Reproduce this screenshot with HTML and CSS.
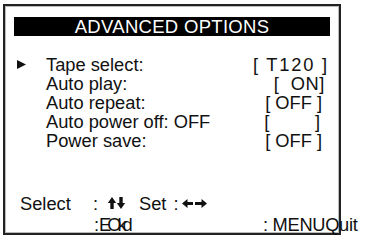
FILE: index.html
```html
<!DOCTYPE html>
<html>
<head>
<meta charset="utf-8">
<link rel="stylesheet" href="styles.css">
</head>
<body>
<div class="screen">
  <div class="title">ADVANCED OPTIONS</div>
  <div class="rows">
    <div class="row"><span class="cursor"><svg width="9" height="9" viewBox="0 0 9 9"><path d="M0 0 L9 4.5 L0 9 Z" fill="#111"/></svg></span><span class="label">Tape select:</span><span class="val tape">[ T120 ]</span></div>
    <div class="row"><span class="cursor"></span><span class="label">Auto play:</span><span class="val v-on">[  ON]</span></div>
    <div class="row"><span class="cursor"></span><span class="label">Auto repeat:</span><span class="val v-off">[ OFF ]</span></div>
    <div class="row"><span class="cursor"></span><span class="label">Auto power off: OFF</span><span class="val v-blank">[         ]</span></div>
    <div class="row"><span class="cursor"></span><span class="label">Power save:</span><span class="val v-off">[ OFF ]</span></div>
  </div>
  <div class="help">
    <div class="hline">
      <span class="hkey">Select</span><span class="colon">:</span><svg class="ud" width="17" height="13" viewBox="0 0 17 13"><path d="M4 0 L8.2 6 L5.7 6 L5.7 12 L2.3 12 L2.3 6 L-0.2 6 Z" fill="#111"/><path d="M13 12 L8.8 6 L11.3 6 L11.3 0 L14.7 0 L14.7 6 L17.2 6 Z" fill="#111"/></svg><span class="set">Set</span><span class="colon2">:</span><svg class="lr" width="25" height="9" viewBox="0 0 25 9"><path d="M0 4.5 L5.5 0 L5.5 3 L11 3 L11 6 L5.5 6 L5.5 9 Z" fill="#111"/><path d="M25 4.5 L19.5 0 L19.5 3 L13 3 L13 6 L19.5 6 L19.5 9 Z" fill="#111"/></svg>
    </div>
    <div class="hline second">
      <span class="colon3">:</span><span class="garble">EOkd</span><span class="quit">: MENUQuit</span>
    </div>
  </div>
</div>
</body>
</html>
```

FILE: styles.css
```css
html, body {
  margin: 0;
  padding: 0;
  background: #fff;
}
body {
  font-family: "Liberation Sans", Arial, sans-serif;
  color: #111;
}
.screen {
  box-sizing: border-box;
  margin: 4px 0 0 3px;
  width: 338px;
  height: 231px;
  border: 2px solid #222;
  box-shadow: inset 0 0 0 1px #bbb;
  padding: 11px 9px 0 9px;
  overflow: visible;
}
.title {
  height: 19px;
  background: #000;
  color: #fff;
  font-size: 18.5px;
  line-height: 20px;
  text-align: center;
  letter-spacing: 0.3px;
}
.rows {
  margin-top: 19px;
}
.row {
  display: flex;
  align-items: center;
  height: 19px;
  font-size: 18.3px;
  line-height: 19px;
}
.cursor {
  width: 32px;
  flex-shrink: 0;
  padding-left: 3px;
  box-sizing: border-box;
  display: flex;
  align-items: center;
}
.label {
  flex: 1;
  white-space: pre;
}
.val {
  white-space: pre;
  text-align: right;
}
.tape {
  letter-spacing: 1.8px;
  margin-right: 1px;
}
.v-on {
  margin-right: 5px;
  letter-spacing: 0.6px;
}
.v-off {
  margin-right: 8px;
}
.v-blank {
  margin-right: 10px;
}
.help {
  margin-top: 43px;
  font-size: 18.3px;
  line-height: 21px;
}
.hline {
  display: flex;
  align-items: center;
  height: 21px;
  white-space: pre;
}
.hline > * {
  flex-shrink: 0;
}
.hkey {
  margin-left: 6px;
  width: 73px;
}
.colon {
  width: 9px;
}
.ud {
  margin-left: 6px;
}
.set {
  margin-left: 14px;
}
.colon2 {
  margin-left: 7px;
}
.lr {
  margin-left: 3px;
}
.second {
  padding-left: 80px;
}
.colon3 {
  width: 5px;
}
.garble {
  width: 164px;
  letter-spacing: -4px;
}
.quit {
  letter-spacing: -0.3px;
}
```
